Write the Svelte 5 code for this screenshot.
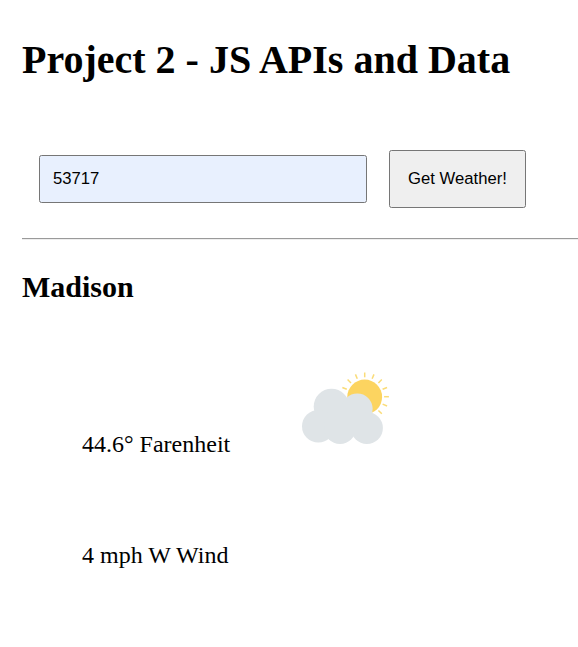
<main>
  <h1>Project 2 - JS APIs and Data</h1>
  <form onsubmit={(e) => e.preventDefault()}>
    <input type="text" value="53717" aria-label="Zip code" />
    <button type="submit">Get Weather!</button>
  </form>
  <hr />
  <h2>Madison</h2>
  <section>
    <p class="temp">44.6° Farenheit</p>
    <svg class="icon" viewBox="0 0 96 80" width="96" height="80" aria-label="Partly cloudy">
      <g stroke="#fadc78" stroke-width="1.5">
        {#each Array(16) as _, i}
          <line x1="64.7" y1="10.3" x2="64.7" y2="5.5" transform={`rotate(${i * 22.5} 64.7 29.7)`} />
        {/each}
      </g>
      <circle cx="64.7" cy="30" r="17.4" fill="#fcd460" />
      <g fill="#dfe4e7">
        <circle cx="31.5" cy="39.5" r="17.8" />
        <circle cx="57.3" cy="41.7" r="15.3" />
        <circle cx="18.3" cy="59.3" r="16.3" />
        <circle cx="66.9" cy="61" r="16" />
        <circle cx="40" cy="61" r="16" />
        <path d="M30 40h35v25H30z" />
      </g>
    </svg>
  </section>
  <p class="wind">4 mph W Wind</p>
</main>

<style>
  :global(body) { background: #fff; overflow: hidden; }
  main { padding: 36px 0 0 22px; color: #000; font-family: "Liberation Serif", "Times New Roman", serif; }
  h1 { margin: 0; font-size: 40px; line-height: 48px; white-space: nowrap; }
  form { display: flex; align-items: center; gap: 22px; margin: 66px 0 0 17px; height: 58px; }
  input, button { box-sizing: border-box; border: 1px solid #767676; border-radius: 2.5px; font: 16.667px "Liberation Sans", Arial, sans-serif; color: #000; }
  input { width: 328px; height: 48px; padding: 0 13px; background: #e8f0fe; }
  button { width: 137px; height: 58px; padding: 0; background: #efefef; }
  hr { margin: 30px 0 0; border: 0; border-top: 1px solid #9a9a9a; border-bottom: 1px solid #eee; }
  h2 { margin: 29px 0 0; font-size: 30px; line-height: 35px; }
  section { display: flex; align-items: flex-start; margin-top: 63px; padding-left: 60px; height: 80px; }
  p { margin: 0; font-size: 24px; line-height: 28px; white-space: nowrap; }
  .temp { width: 218px; padding-top: 63px; }
  .wind { padding: 94px 0 0 60px; }
</style>
